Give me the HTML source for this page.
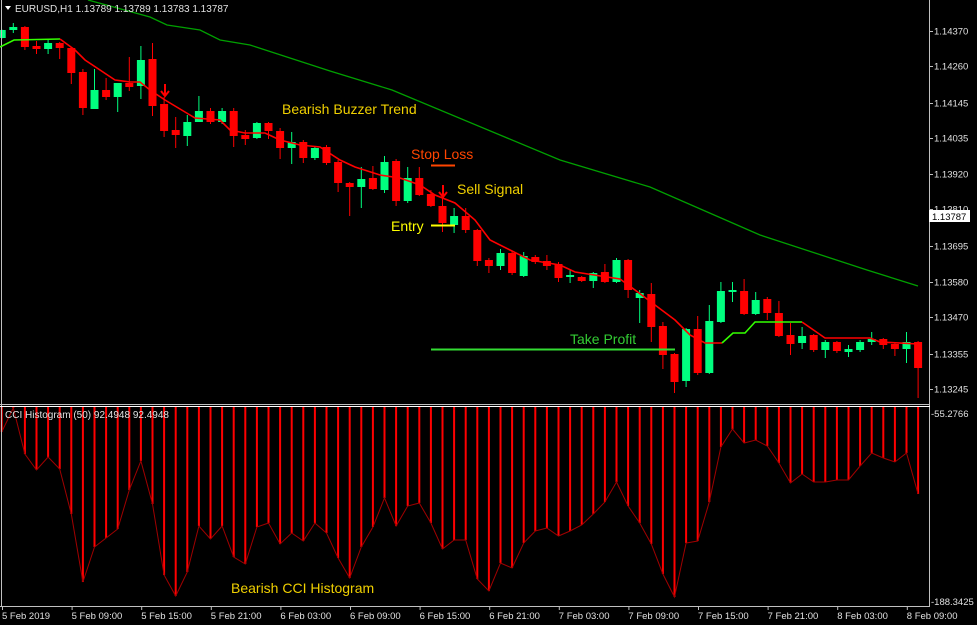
<!DOCTYPE html>
<html><head><meta charset="utf-8"><style>
html,body{margin:0;padding:0;background:#000;width:977px;height:625px;overflow:hidden}
svg{display:block}
text{font-family:"Liberation Sans",sans-serif}
</style></head><body>
<svg id="s" width="977" height="625" xmlns="http://www.w3.org/2000/svg">
<rect width="977" height="625" fill="#000"/>
<g id="g"></g>
<!-- frames -->
<line x1="929.5" y1="0" x2="929.5" y2="606" stroke="#c0c0c0"/>
<line x1="1.5" y1="0" x2="1.5" y2="606" stroke="#c0c0c0"/>
<line x1="0" y1="404.5" x2="930" y2="404.5" stroke="#c0c0c0"/>
<line x1="0" y1="406.5" x2="930" y2="406.5" stroke="#ffffff"/>
<line x1="0" y1="606.5" x2="930" y2="606.5" stroke="#c0c0c0"/>
<!-- green MA -->
<polyline fill="none" stroke="#00a000" stroke-width="1.3" points="88,0 150,17 167,25 200,30 220,40 250,45 330,71 392,90 500,135 560,160 650,187 760,235 867,270 918,286"/>
<!-- buzzer trend line -->
<polyline fill="none" stroke="#33ff00" stroke-width="1.6" points="0,47 14,40 60,39"/>
<polyline fill="none" stroke="#ff0000" stroke-width="1.6" points="60,39 75,50 85,60 100,70 115,80 130,82 140,82 150,90 165,100 185,112 195,118 220,120 230,130 245,133 265,133 280,140 300,145 320,147 340,160 355,167 380,175 400,178 420,185 435,195 455,203 475,220 490,240 510,250 530,260 560,265 575,272 620,279 635,290 655,305 675,320 690,335 705,343 722,343"/>
<polyline fill="none" stroke="#33ff00" stroke-width="1.6" points="722,343 733,333 745,333 755,322 802,322"/>
<polyline fill="none" stroke="#ff0000" stroke-width="1.6" points="802,322 825,338 870,338 880,342 918,344"/>
<!-- annotations -->
<line x1="431" y1="349.5" x2="675" y2="349.5" stroke="#33dd33" stroke-width="2"/>
<line x1="431" y1="165.5" x2="455" y2="165.5" stroke="#ff4500" stroke-width="2"/>
<line x1="431" y1="225.5" x2="455" y2="225.5" stroke="#ffff00" stroke-width="2"/>
<text x="282" y="114" font-size="14" fill="#f0d000">Bearish Buzzer Trend</text>
<text x="411" y="159" font-size="14" fill="#ff4500">Stop Loss</text>
<text x="457" y="194" font-size="14" fill="#f0d000">Sell Signal</text>
<text x="391" y="231" font-size="14" fill="#ffff00">Entry</text>
<text x="570" y="344" font-size="14" fill="#33cc33">Take Profit</text>
<text x="231" y="593" font-size="14" fill="#f0d000">Bearish CCI Histogram</text>
<!-- arrows -->
<g stroke="#ff0000" stroke-width="2" fill="none">
<path d="M165,84 V96 M161,91 L165,96 L169,91"/>
<path d="M443,185 V197 M439,192 L443,197 L447,192"/>
</g>
<!-- headers -->
<path d="M5,6 L11,6 L8,10 Z" fill="#fff"/>
<text x="15" y="12" font-size="10" fill="#e0e0e0">EURUSD,H1  1.13789 1.13789 1.13783 1.13787</text>
<text x="5" y="418" font-size="10" fill="#e0e0e0">CCI Histogram (50) 92.4948 92.4948</text>
<g id="ax" font-size="9.5" fill="#e0e0e0"></g>
<rect x="929" y="210" width="41" height="12" fill="#fff"/>
<text x="932" y="220" font-size="9.5" fill="#000">1.13787</text>
</svg>
<script>
var g=document.getElementById('g'),ax=document.getElementById('ax'),NS='http://www.w3.org/2000/svg';
function el(p,t,a,txt){var e=document.createElementNS(NS,t);for(var k in a)e.setAttribute(k,a[k]);if(txt)e.textContent=txt;p.appendChild(e);return e;}
// histogram
var hb=[432,408,454,470,457,469,514,582,547,538,529,490,461,504,575,596,572,526,539,526,557,564,527,523,544,533,541,523,533,558,578,547,527,498,526,506,503,523,549,540,540,579,591,563,568,543,531,528,536,531,525,514,502,482,506,523,544,574,597,543,541,502,447,429,443,440,446,463,483,474,482,482,480,480,466,453,458,462,453,494];
var pts=[];
for(var k=0;k<hb.length;k++){var x=1.7+k*11.6;el(g,'line',{x1:x,y1:407,x2:x,y2:hb[k],stroke:'#ff0000','stroke-width':2});pts.push(x+','+hb[k]);}
el(g,'polyline',{points:pts.join(' '),fill:'none',stroke:'#a00000','stroke-width':1});
// candles: [bull, top, bottom, wickTop, wickBot]
var c=[[1,30,38,29,39],[1,27,30,23,33],[0,27,47,26,50],[0,46,49,41,54],[1,43,49,39,54],[0,43,48,42,59],[0,48,73,47,84],[0,72,108,69,115],[1,90,109,69,109],[0,90,97,78,100],[1,83,97,83,112],[0,83,87,57,91],[1,60,86,46,99],[0,59,106,43,116],[0,104,131,97,137],[0,130,135,117,148],[1,122,136,115,146],[1,111,122,96,122],[0,111,122,108,124],[1,111,122,108,124],[0,111,136,108,147],[0,135,139,130,145],[1,123,138,122,139],[0,123,131,122,139],[0,131,148,128,159],[1,142,148,132,164],[0,142,158,140,163],[1,148,158,146,160],[0,147,163,145,165],[0,162,183,160,192],[0,183,187,182,216],[1,179,187,167,208],[0,178,189,166,190],[1,162,190,156,193],[0,161,201,159,206],[1,178,201,167,203],[0,178,195,167,196],[0,194,206,190,207],[0,206,223,197,232],[1,216,225,208,233],[0,216,230,208,233],[0,230,261,229,266],[0,260,266,258,273],[1,253,266,249,270],[0,253,273,251,275],[1,256,276,252,277],[0,257,262,255,264],[0,261,266,255,270],[0,264,278,262,282],[1,275,277,270,283],[0,277,281,276,282],[1,273,281,272,288],[0,272,282,264,283],[1,260,282,258,283],[0,260,290,259,298],[1,293,298,290,323],[0,294,327,283,342],[0,326,355,322,369],[0,354,382,353,393],[1,329,381,328,387],[0,329,373,316,375],[1,321,373,305,374],[1,291,322,282,323],[1,290,292,282,302],[0,291,314,279,315],[1,300,314,292,315],[0,299,313,297,320],[0,313,336,301,337],[0,335,344,323,355],[1,336,343,327,349],[0,335,350,334,352],[1,342,350,340,358],[0,342,351,341,353],[1,349,352,345,357],[1,342,350,340,352],[1,339,342,332,345],[0,339,345,338,349],[0,344,349,342,356],[1,342,349,332,363],[0,342,368,341,398]];
for(var k=0;k<c.length;k++){var d=c[k],x=1.7+k*11.6,col=d[0]?'#00ff7f':'#ff0000';
el(g,'line',{x1:x,y1:d[3],x2:x,y2:d[4],stroke:col,'stroke-width':1});
el(g,'rect',{x:x-4,y:d[1],width:8,height:Math.max(1,d[2]-d[1]),fill:col});}
// price axis
var pl=[['1.14370',31],['1.14260',66],['1.14145',103],['1.14035',138],['1.13920',174],['1.13810',209],['1.13695',246],['1.13580',282],['1.13470',317],['1.13355',354],['1.13245',389]];
pl.forEach(function(p){el(ax,'line',{x1:929,y1:p[1]+.5,x2:933,y2:p[1]+.5,stroke:'#c0c0c0'});el(ax,'text',{x:934,y:p[1]+3.5},p[0]);});
el(ax,'text',{x:931,y:417},'-55.2766');
el(ax,'text',{x:931,y:605},'-188.3425');
var tl=['5 Feb 2019','5 Feb 09:00','5 Feb 15:00','5 Feb 21:00','6 Feb 03:00','6 Feb 09:00','6 Feb 15:00','6 Feb 21:00','7 Feb 03:00','7 Feb 09:00','7 Feb 15:00','7 Feb 21:00','8 Feb 03:00','8 Feb 09:00'];
tl.forEach(function(t,i){var x=2+i*69.6;el(ax,'line',{x1:x+.5,y1:606,x2:x+.5,y2:610,stroke:'#c0c0c0'});el(ax,'text',{x:x,y:619},t);});
</script>
</body></html>
